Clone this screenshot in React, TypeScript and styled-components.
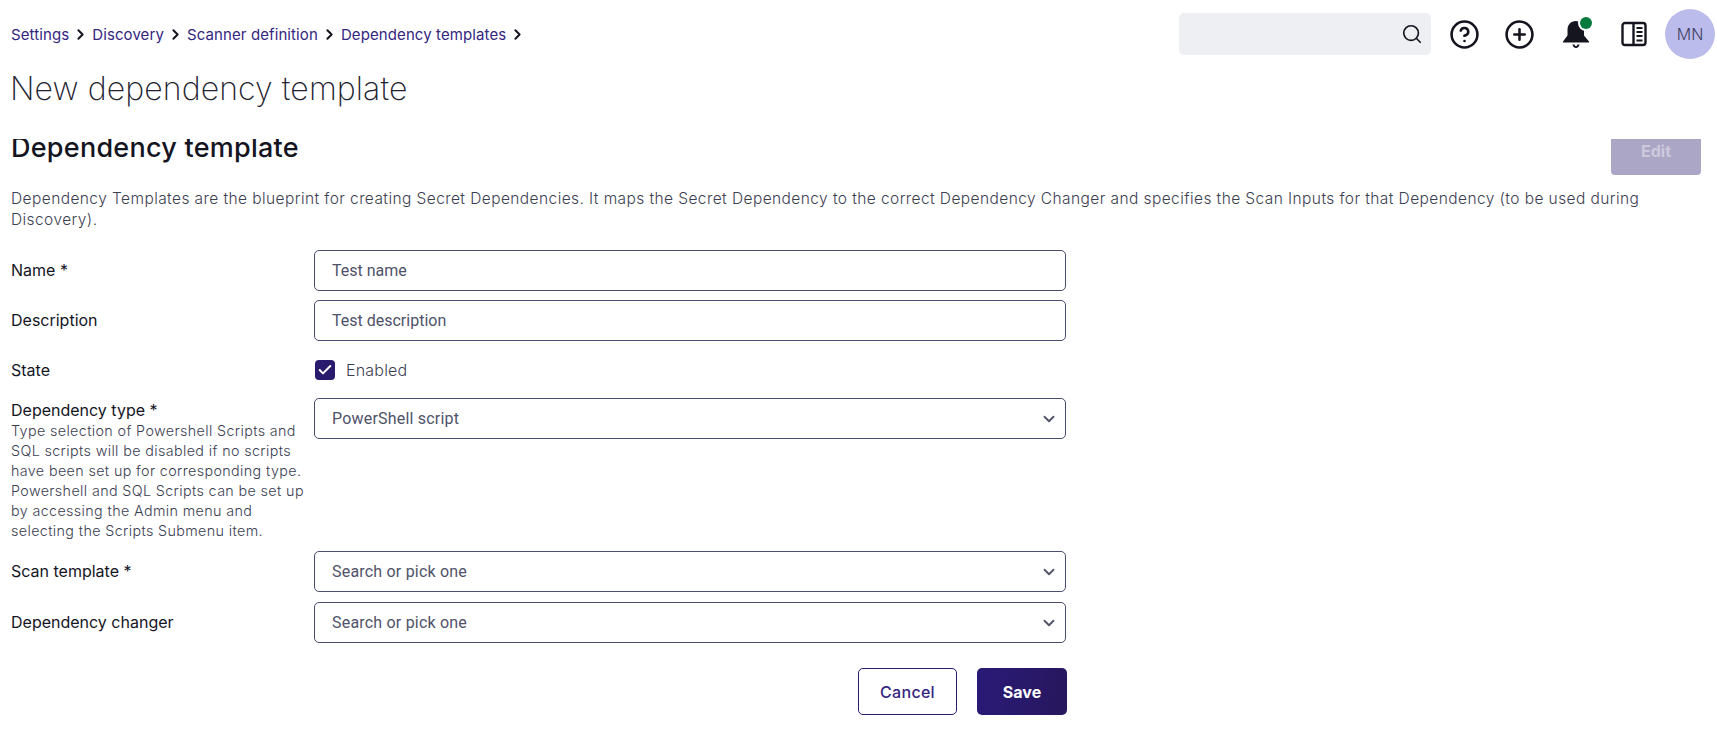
import React from "react";
import styled, { createGlobalStyle } from "styled-components";
import { ChevronDown, ChevronRight, CircleHelp, CirclePlus, Search, Check } from "lucide-react";

const Global = createGlobalStyle`
  html, body { margin: 0; padding: 0; background: #fff; overflow: hidden; }
  body { font-family: Inter, "Noto Sans", sans-serif; color: #14151f; }
  * { box-sizing: border-box; }
`;

const Page = styled.div`
  width: 1717px;
  height: 743px;
  overflow: hidden;
  display: flex;
  flex-direction: column;
`;

const TopBar = styled.header`
  height: 70px;
  padding: 9px 2px 0 11px;
  display: flex;
  align-items: flex-start;
  justify-content: space-between;
`;

const Crumbs = styled.nav`
  display: flex;
  align-items: center;
  gap: 3px;
  height: 50px;
`;

const Crumb = styled.a`
  font-size: 15px;
  color: #34267f;
  letter-spacing: 0.1px;
`;

const Actions = styled.div`
  display: flex;
  align-items: center;
`;

const SearchBox = styled.div`
  width: 252px;
  height: 42px;
  margin-right: 8px;
  padding-right: 8px;
  border-radius: 5px;
  background: #eeeff3;
  display: flex;
  align-items: center;
  justify-content: flex-end;
  color: #14151f;
`;

const IconSlot = styled.button<{ $w: number }>`
  width: ${(p) => p.$w}px;
  height: 50px;
  padding: 0;
  border: 0;
  background: none;
  color: #14151f;
  display: flex;
  align-items: center;
  justify-content: center;
  position: relative;
`;

const Dot = styled.span`
  position: absolute;
  top: 8px;
  left: 31px;
  width: 12px;
  height: 12px;
  border-radius: 50%;
  background: #047a3d;
  box-shadow: 0 0 0 2px #fff;
`;

const Avatar = styled.div`
  width: 50px;
  height: 50px;
  border-radius: 50%;
  background: #bcbcec;
  color: #3f4163;
  font-size: 16px;
  font-weight: 300;
  display: flex;
  align-items: center;
  justify-content: center;
`;

const Title = styled.h1`
  margin: 0;
  height: 69px;
  padding-left: 10px;
  font-size: 32px;
  line-height: 37px;
  font-weight: 200;
  letter-spacing: 0.1px;
  color: #22232f;
`;

const Panel = styled.main`
  flex: 1;
  overflow: hidden;
  padding: 0 16px 0 11px;
`;

const PanelHead = styled.div`
  display: flex;
  justify-content: space-between;
  align-items: flex-start;
  height: 49px;
`;

const Heading = styled.h2`
  margin: -7px 0 0;
  font-size: 27px;
  line-height: 32px;
  font-weight: 500;
  letter-spacing: 0.25px;
  color: #14151f;
`;

const EditButton = styled.button`
  width: 90px;
  height: 36px;
  border: 0;
  border-radius: 0 0 4px 4px;
  padding: 0 0 12px;
  background: #aca6c6;
  color: #cdc9dd;
  font-family: inherit;
  font-size: 16px;
  font-weight: 700;
`;

const Intro = styled.p`
  margin: 0 0 20px;
  font-size: 15.5px;
  line-height: 21px;
  color: #3c3e52;
  letter-spacing: 0.42px;
  font-weight: 300;
`;

const Form = styled.form`
  width: 1056px;
  display: grid;
  grid-template-columns: 303px 753px;
`;

const Row = styled.div<{ $h: number }>`
  grid-column: 1 / -1;
  display: grid;
  grid-template-columns: subgrid;
  min-height: ${(p) => p.$h}px;
`;

const LabelCell = styled.div<{ $pad?: number }>`
  padding-top: ${(p) => p.$pad ?? 9}px;
`;

const Label = styled.label`
  display: block;
  font-size: 16px;
  line-height: 22px;
  font-weight: 400;
  color: #14151f;
`;

const Hint = styled.div`
  width: 296px;
  font-size: 14.3px;
  line-height: 20px;
  letter-spacing: 0.38px;
  font-weight: 300;
  color: #3c3e52;
`;

const fieldCss = `
  width: 752px;
  height: 41px;
  border: 1px solid #4a4d6d;
  border-radius: 5px;
  padding: 0 17px;
  background: #fff;
  font-family: Roboto, sans-serif;
  font-size: 16px;
  color: #4f5269;
`;

const TextInput = styled.input`
  ${fieldCss}
  display: block;
  outline: none;
`;

const Select = styled.div`
  ${fieldCss}
  padding-right: 7px;
  letter-spacing: 0.2px;
  display: flex;
  align-items: center;
  justify-content: space-between;
`;

const CheckRow = styled.div`
  display: flex;
  align-items: center;
  gap: 11px;
  height: 39px;
  padding-left: 1px;
  font-size: 16px;
  font-weight: 300;
  letter-spacing: 0.2px;
  color: #3c3e52;
`;

const CheckBox = styled.span`
  width: 20px;
  height: 20px;
  border-radius: 4px;
  background: #2a1a6e;
  color: #fff;
  display: flex;
  align-items: center;
  justify-content: center;
`;

const Buttons = styled.div`
  grid-column: 1 / -1;
  display: flex;
  justify-content: flex-end;
  gap: 20px;
  margin-top: 25px;
`;

const Cancel = styled.button`
  width: 99px;
  height: 47px;
  border: 1px solid #2a1a6e;
  border-radius: 5px;
  background: #fff;
  color: #34267f;
  font-family: inherit;
  font-size: 16px;
  font-weight: 500;
  letter-spacing: 0.3px;
`;

const Save = styled.button`
  width: 90px;
  height: 47px;
  border: 0;
  border-radius: 5px;
  background: linear-gradient(100deg, #2a1a78, #27175c);
  color: #fff;
  font-family: inherit;
  font-size: 16px;
  font-weight: 700;
`;

const Sep = () => <ChevronRight size={17} strokeWidth={2.8} color="#14151f" />;

const Bell = () => (
  <svg width="30" height="30" viewBox="0 0 30 30" fill="currentColor" aria-hidden="true">
    <path d="M15 2c-5.500 0-8.500 4-8.500 9v5.500L2 22.500v1h26v-1l-5-6V9c-2-1-4-3-3.500-5.500C18 2.500 16.500 2 15 2z" />
    <path d="M11.500 25.500h2c.2 1 .8 1.500 1.500 1.500s1.300-.5 1.500-1.500h2c-.2 2.300-1.700 3.500-3.500 3.500s-3.300-1.200-3.500-3.500z" />
  </svg>
);

const PanelIcon = () => (
  <svg width="26" height="26" viewBox="0 0 26 26" fill="none" stroke="currentColor" aria-hidden="true">
    <rect x="1.500" y="2" width="23" height="22" rx="2.500" strokeWidth="2.400" />
    <path d="M12.500 2v22" strokeWidth="2.400" />
    <path d="M15.500 7h6M15.500 11h6M15.500 15h6M15.500 19.500h6" strokeWidth="2.200" />
  </svg>
);

const crumbs = ["Settings", "Discovery", "Scanner definition", "Dependency templates"];

export default function App() {
  return (
    <Page>
      <Global />
      <TopBar>
        <Crumbs>
          {crumbs.map((c) => (
            <React.Fragment key={c}>
              <Crumb>{c}</Crumb>
              <Sep />
            </React.Fragment>
          ))}
        </Crumbs>
        <Actions>
          <SearchBox>
            <Search size={22} strokeWidth={1.8} />
          </SearchBox>
          <IconSlot $w={50}>
            <CircleHelp size={31} strokeWidth={2} />
          </IconSlot>
          <IconSlot $w={60}>
            <CirclePlus size={31} strokeWidth={2} />
          </IconSlot>
          <IconSlot $w={54}>
            <Bell />
            <Dot />
          </IconSlot>
          <IconSlot $w={62}>
            <PanelIcon />
          </IconSlot>
          <Avatar>MN</Avatar>
        </Actions>
      </TopBar>
      <Title>New dependency template</Title>
      <Panel>
        <PanelHead>
          <Heading>Dependency template</Heading>
          <EditButton disabled>Edit</EditButton>
        </PanelHead>
        <Intro>
          Dependency Templates are the blueprint for creating Secret Dependencies. It maps the Secret Dependency to the
          correct Dependency Changer and specifies the Scan Inputs for that Dependency (to be used during
          <br />
          Discovery).
        </Intro>
        <Form>
          <Row $h={50}>
            <LabelCell><Label>Name *</Label></LabelCell>
            <TextInput defaultValue="Test name" />
          </Row>
          <Row $h={50}>
            <LabelCell><Label>Description</Label></LabelCell>
            <TextInput defaultValue="Test description" />
          </Row>
          <Row $h={48}>
            <LabelCell><Label>State</Label></LabelCell>
            <CheckRow>
              <CheckBox><Check size={16} strokeWidth={3} /></CheckBox>
              Enabled
            </CheckRow>
          </Row>
          <Row $h={153}>
            <LabelCell $pad={1}>
              <Label>Dependency type *</Label>
              <Hint>
                Type selection of Powershell Scripts and SQL scripts will be disabled if no scripts have been set up for
                corresponding type. Powershell and SQL Scripts can be set up by accessing the Admin menu and selecting
                the Scripts Submenu item.
              </Hint>
            </LabelCell>
            <Select>PowerShell script<ChevronDown size={18} strokeWidth={2.4} /></Select>
          </Row>
          <Row $h={51}>
            <LabelCell><Label>Scan template *</Label></LabelCell>
            <Select>Search or pick one<ChevronDown size={18} strokeWidth={2.4} /></Select>
          </Row>
          <Row $h={41}>
            <LabelCell><Label>Dependency changer</Label></LabelCell>
            <Select>Search or pick one<ChevronDown size={18} strokeWidth={2.4} /></Select>
          </Row>
          <Buttons>
            <Cancel type="button">Cancel</Cancel>
            <Save type="button">Save</Save>
          </Buttons>
        </Form>
      </Panel>
    </Page>
  );
}
